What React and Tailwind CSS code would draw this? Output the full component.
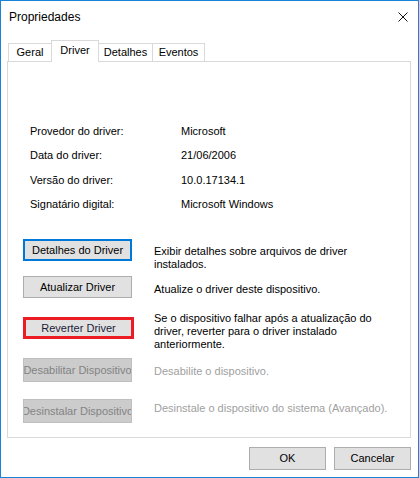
import React from 'react'

const INFO = [
  ['Provedor do driver:', 'Microsoft'],
  ['Data do driver:', '21/06/2006'],
  ['Versão do driver:', '10.0.17134.1'],
  ['Signatário digital:', 'Microsoft Windows'],
]

function Tab({ label, active, className = '' }) {
  return (
    <div
      className={`flex items-center justify-center border-[#d9d9d9] bg-white ${
        active ? 'h-[22px] -mb-px relative z-10 border-l border-t border-r pb-[3px]' : 'h-[18px] border-t'
      } ${className}`}
    >
      {label}
    </div>
  )
}

function WinButton({ children, variant = 'normal', className = '' }) {
  const styles = {
    normal: 'bg-[#e1e1e1] border border-[#adadad] text-black',
    default: 'bg-[#e1e1e1] border-2 border-[#0078d7] text-black',
    marked: 'bg-[#e1e1e1] border-[3px] border-[#ed1c24] text-[#1c1c3a]',
    disabled: 'bg-[#cccccc] border border-[#bfbfbf] text-[#838383]',
  }
  return (
    <div className={`shrink-0 flex items-center justify-center overflow-hidden whitespace-nowrap ${styles[variant]} ${className}`}>
      <span className="shrink-0">{children}</span>
    </div>
  )
}

export default function App() {
  return (
    <div className="w-[419px] h-[478px] bg-white border border-[#1883d7] flex flex-col font-['Liberation_Sans',Arial,sans-serif] text-[11px] text-black">
      {/* barra de título */}
      <div className="h-[32px] flex items-center justify-between pl-[8px] pr-[10px]">
        <span className="text-[12px]">Propriedades</span>
        <svg width="10" height="10" viewBox="0 0 10 10" className="mt-[-1px]">
          <path d="M0.5 0.5 L9.5 9.5 M9.5 0.5 L0.5 9.5" stroke="#111" strokeWidth="1" />
        </svg>
      </div>

      {/* abas */}
      <div className="mt-[7px] h-[21px] flex items-end pl-[7px]">
        <Tab label="Geral" className="w-[43px] border-l" />
        <Tab label="Driver" active className="w-[48px]" />
        <Tab label="Detalhes" className="w-[54px] border-r" />
        <Tab label="Eventos" className="w-[52px] border-r" />
      </div>

      {/* painel */}
      <div className="ml-[6px] w-[404px] h-[377px] border border-[#d9d9d9] bg-white">
        <div className="pt-[57px] pl-[22px]">
          {INFO.map(([k, v]) => (
            <div key={k} className="flex h-[24.33px] items-center">
              <span className="w-[151px]">{k}</span>
              <span>{v}</span>
            </div>
          ))}
        </div>

        <div className="mt-[23px] pl-[15px] flex flex-col">
          <div className="flex items-start">
            <WinButton variant="default" className="w-[109px] h-[22px]">Detalhes do Driver</WinButton>
            <p className="ml-[22px] mt-[6px] leading-[13px] whitespace-nowrap">
              Exibir detalhes sobre arquivos de driver<br />instalados.
            </p>
          </div>

          <div className="mt-[5px] flex items-start">
            <WinButton className="w-[109px] h-[22px]">Atualizar Driver</WinButton>
            <p className="ml-[22px] mt-[7px] leading-[13px] whitespace-nowrap">Atualize o driver deste dispositivo.</p>
          </div>

          <div className="mt-[19px] flex items-start">
            <WinButton variant="marked" className="w-[111px] h-[22px]">Reverter Driver</WinButton>
            <p className="ml-[20px] -mt-[5px] leading-[13px] whitespace-nowrap">
              Se o dispositivo falhar após a atualização do<br />
              driver, reverter para o driver instalado<br />
              anteriormente.
            </p>
          </div>

          <div className="mt-[7px] flex items-start">
            <WinButton variant="disabled" className="w-[109px] h-[24px]">Desabilitar Dispositivo</WinButton>
            <p className="ml-[22px] mt-[7px] leading-[13px] whitespace-nowrap text-[#a0a0a0]">Desabilite o dispositivo.</p>
          </div>

          <div className="mt-[17px] flex items-start">
            <WinButton variant="disabled" className="w-[109px] h-[24px]">Desinstalar Dispositivo</WinButton>
            <p className="ml-[22px] mt-[3px] leading-[13px] whitespace-nowrap text-[#a0a0a0]">
              Desinstale o dispositivo do sistema (Avançado).
            </p>
          </div>
        </div>
      </div>

      {/* botões */}
      <div className="mt-[9px] flex justify-end pr-[7px] gap-[8px]">
        <WinButton className="w-[77px] h-[23px]">OK</WinButton>
        <WinButton className="w-[77px] h-[23px]">Cancelar</WinButton>
      </div>
    </div>
  )
}
